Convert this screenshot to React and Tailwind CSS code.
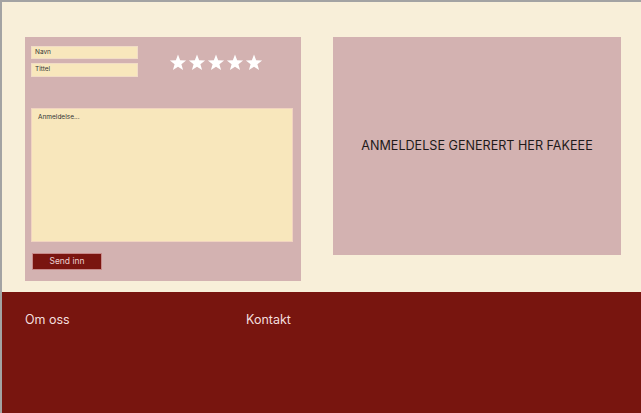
import React from "react";

function Star() {
  return (
    <svg width="18" height="17" viewBox="0 0 24 23" className="block">
      <path
        d="M12 0.8l2.9 7.6 8.1.3-6.4 5 2.3 7.9L12 17.1l-6.9 4.5 2.3-7.9-6.4-5 8.1-.3z"
        fill="#ffffff"
      />
    </svg>
  );
}

export default function App() {
  return (
    <div className="w-[641px] h-[413px] flex flex-col bg-[#f8efd9] border-t-2 border-l-2 border-[#a3a3a3] font-['Inter',sans-serif] overflow-hidden">
      <main className="h-[290px] flex items-start pt-[35px] pl-[23px] gap-[32px]">
        <section className="w-[276px] h-[244px] bg-[#d3b2b1] flex flex-col pl-[6px] pr-[8px] pt-[9px]">
          <div className="flex h-[62px]">
            <div className="flex flex-col gap-[4px]">
              <div className="w-[107px] h-[13px] bg-[#f8e7bc] border border-[#f1dcc6] flex items-center pl-[3px] text-[6.5px] text-[#333]">
                Navn
              </div>
              <div className="w-[107px] h-[14px] bg-[#f8e7bc] border border-[#f1dcc6] flex items-center pl-[3px] text-[6.5px] text-[#333]">
                Tittel
              </div>
            </div>
            <div className="flex-1 flex justify-center pt-[8px] pl-[1px] gap-[1px]">
              <Star />
              <Star />
              <Star />
              <Star />
              <Star />
            </div>
          </div>
          <div className="w-[262px] h-[134px] bg-[#f8e7bc] border border-[#f1d4c0] pl-[6px] pt-[4px] text-[6.5px] text-[#333]">
            Anmeldelse...
          </div>
          <div className="pt-[11px] pl-[1px]">
            <button className="w-[70px] h-[17px] bg-[#7a1510] border border-[#c78a8a] text-[8.5px] text-[#ecd0d0] flex items-center justify-center">
              Send inn
            </button>
          </div>
        </section>
        <section className="w-[288px] h-[218px] bg-[#d3b2b1] flex items-center justify-center">
          <span className="text-[12.6px] text-[#1f1a1a]">
            ANMELDELSE GENERERT HER FAKEEE
          </span>
        </section>
      </main>
      <footer className="flex-1 bg-[#78150f] flex items-start pt-[19px] pl-[23px] text-[12.5px] text-[#f3dede]">
        <span className="w-[221px]">Om oss</span>
        <span>Kontakt</span>
      </footer>
    </div>
  );
}
